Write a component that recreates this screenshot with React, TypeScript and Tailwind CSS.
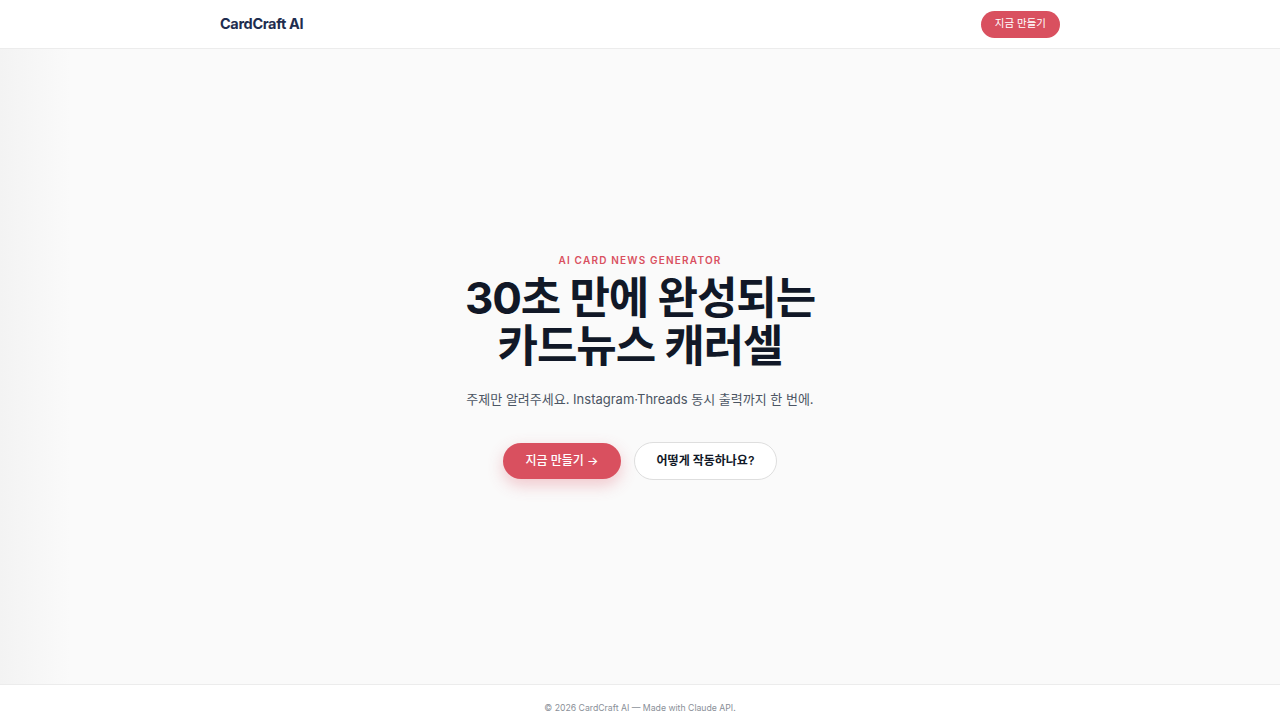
import React from 'react';

const font = { fontFamily: 'Inter, "Noto Sans CJK KR", sans-serif' };

export default function App() {
  return (
    <div className="min-h-screen flex flex-col bg-[#fafafa] text-slate-900" style={font}>
      <header className="h-[49px] bg-white border-b border-[#ececec] shrink-0">
        <div className="max-w-4xl mx-auto px-7 h-full flex items-center justify-between">
          <span className="text-[14.5px] font-bold text-[#1e2d4f] tracking-tight">CardCraft AI</span>
          <button className="h-[27px] px-[14px] rounded-full bg-[#d9505f] text-white text-[10.5px] font-normal">
            지금 만들기
          </button>
        </div>
      </header>

      <main className="flex-1 flex flex-col items-center justify-center text-center bg-[linear-gradient(to_right,#f3f3f3,#fafafa_70px)]">
        <p className="text-[10px] font-semibold tracking-[0.12em] text-[#d9505f]">AI CARD NEWS GENERATOR</p>
        <h1 className="mt-[6px] text-[44px] leading-[48px] font-bold tracking-tight text-[#111827]">
          30초 만에 완성되는
          <br />
          카드뉴스 캐러셀
        </h1>
        <p className="mt-[20px] text-[13px] text-[#4b5563]">
          주제만 알려주세요. Instagram·Threads 동시 출력까지 한 번에.
        </p>
        <div className="mt-[32px] flex items-center gap-[13px]">
          <button className="h-[36px] w-[118px] rounded-full bg-[#d9505f] text-white text-[12px] font-medium shadow-[0_6px_16px_rgba(217,80,95,0.3)]">
            지금 만들기 →
          </button>
          <button className="h-[38px] w-[143px] rounded-full bg-white border border-[#dedede] text-[12px] font-semibold text-[#111827]">
            어떻게 작동하나요?
          </button>
        </div>
      </main>

      <footer className="h-[35px] shrink-0 bg-white border-t border-[#ececec] flex justify-center pt-[18px]">
        <span className="text-[8.7px] leading-[11px] text-[#8a8f98]">© 2026 CardCraft AI — Made with Claude API.</span>
      </footer>
    </div>
  );
}
